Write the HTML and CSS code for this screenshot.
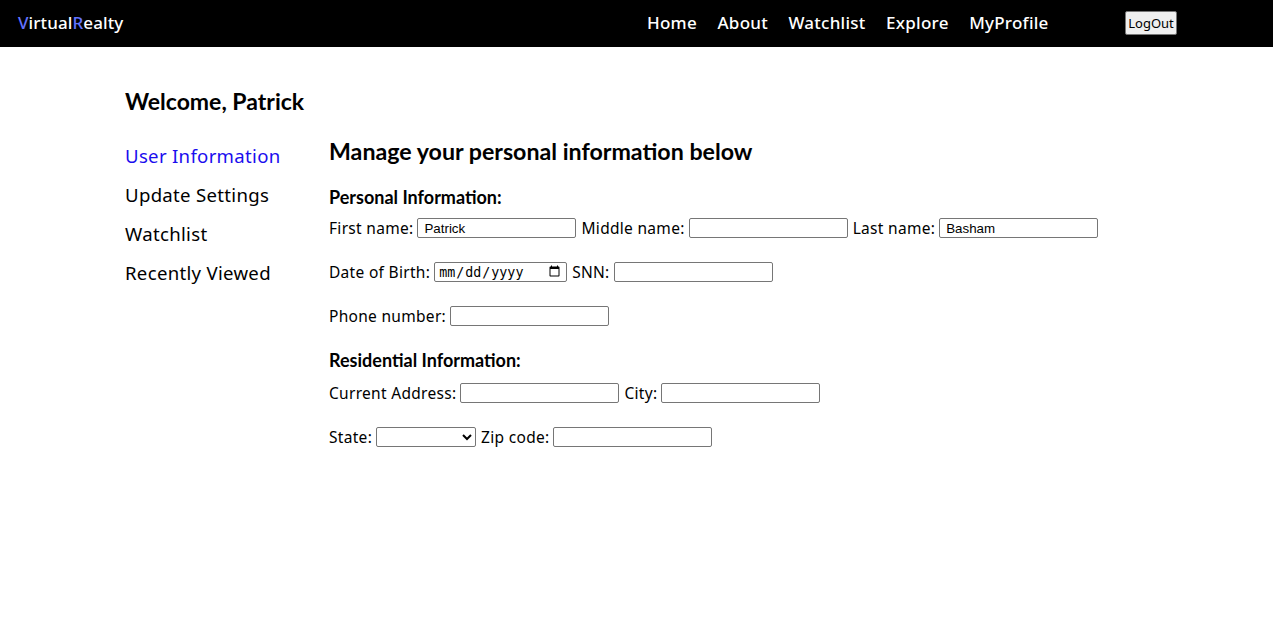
FILE: index.html
```html
<!DOCTYPE html>
<html>
<head>
<meta charset="utf-8">
<link rel="stylesheet" href="styles.css">
</head>
<body>
<nav class="nav">
  <div class="logo"><span class="accent">V</span>irtual<span class="accent">R</span>ealty</div>
  <ul class="links">
    <li>Home</li>
    <li>About</li>
    <li>Watchlist</li>
    <li>Explore</li>
    <li>MyProfile</li>
  </ul>
  <button class="logout">LogOut</button>
</nav>
<div class="page">
  <h1 class="welcome">Welcome, Patrick</h1>
  <div class="layout">
    <ul class="side">
      <li class="active">User Information</li>
      <li>Update Settings</li>
      <li>Watchlist</li>
      <li>Recently Viewed</li>
    </ul>
    <div class="main">
      <h2 class="title">Manage your personal information below</h2>
      <h3 class="section">Personal Information:</h3>
      <div class="row">
        <label>First name:</label> <input class="txt" type="text" value="Patrick">
        <label>Middle name:</label> <input class="txt" type="text">
        <label>Last name:</label> <input class="txt" type="text" value="Basham">
      </div>
      <div class="row">
        <label>Date of Birth:</label> <input class="date" type="date">
        <label>SNN:</label> <input class="txt" type="text">
      </div>
      <div class="row">
        <label>Phone number:</label> <input class="txt" type="text">
      </div>
      <h3 class="section res">Residential Information:</h3>
      <div class="row">
        <label>Current Address:</label> <input class="txt" type="text">
        <label>City:</label> <input class="txt" type="text">
      </div>
      <div class="row">
        <label>State:</label> <select class="sel"><option></option></select>
        <label>Zip code:</label> <input class="txt" type="text">
      </div>
    </div>
  </div>
</div>
</body>
</html>
```
FILE: styles.css
```css
body {
  margin: 0;
  font-family: "Noto Sans", sans-serif;
  background: #fff;
  color: #000;
}
.nav {
  height: 47px;
  background: #000;
  display: flex;
  align-items: center;
  padding-left: 18px;
}
.logo {
  color: #fff;
  font-size: 17px;
  font-weight: 500;
  letter-spacing: 0.1px;
  width: 629px;
  padding-bottom: 3px;
}
.accent { color: #6272ff; }
.links {
  list-style: none;
  margin: 0;
  padding: 0 0 3px 0;
  display: flex;
  gap: 20.5px;
  width: 478px;
}
.links li {
  color: #fff;
  font-size: 17px;
  font-weight: 500;
  letter-spacing: 0.25px;
}
.logout {
  font-family: "Noto Sans", sans-serif;
  font-size: 13px;
  height: 24px;
  width: 52px;
  padding: 0;
  background: #efefef;
  border: 1px solid #767676;
  border-radius: 2px;
  color: #000;
  margin-top: -1px;
}
.page {
  padding-left: 125px;
}
.welcome {
  font-family: Lato, sans-serif;
  font-weight: 700;
  font-size: 23px;
  margin: 40px 0 0 0;
  line-height: 28px;
}
.layout {
  display: flex;
  margin-top: 21px;
}
.side {
  list-style: none;
  margin: 0;
  padding: 0;
  width: 204px;
  flex: none;
}
.side li {
  font-size: 18.6px;
  letter-spacing: 0.3px;
  line-height: 39px;
  height: 39px;
}
.side li.active { color: #1a0dee; }
.main { flex: 1; }
.title {
  font-family: Lato, sans-serif;
  font-weight: 700;
  font-size: 23.2px;
  margin: 0;
  line-height: 30px;
}
.section {
  font-family: Lato, sans-serif;
  font-weight: 700;
  font-size: 18px;
  margin: 19px 0 0 0;
  line-height: 24px;
}
.section.res { margin-top: 20px; }
.row {
  font-size: 15.5px;
  letter-spacing: 0.3px;
  height: 24px;
  display: flex;
  align-items: center;
  gap: 5px;
  margin-top: 20px;
}
.section + .row { margin-top: 7px; }
.section.res + .row { margin-top: 9px; }
.row label { margin-right: -1px; }
.txt {
  width: 159px;
  height: 20px;
  box-sizing: border-box;
  border: 1px solid #767676;
  border-radius: 2px;
  padding: 1px 6px;
  font-family: "Liberation Sans", Arial, sans-serif;
  font-size: 13.33px;
  letter-spacing: 0;
  margin: 0;
}
.date {
  width: 133px;
  height: 20px;
  box-sizing: border-box;
  border: 1px solid #767676;
  border-radius: 2px;
  padding: 1px 3px;
  font-size: 13.33px;
  letter-spacing: 0;
  margin: 0;
}
.sel {
  width: 100px;
  height: 20px;
  box-sizing: border-box;
  border: 1px solid #767676;
  border-radius: 2px;
  font-size: 13.33px;
  margin: 0;
  background: #fff;
}
```
